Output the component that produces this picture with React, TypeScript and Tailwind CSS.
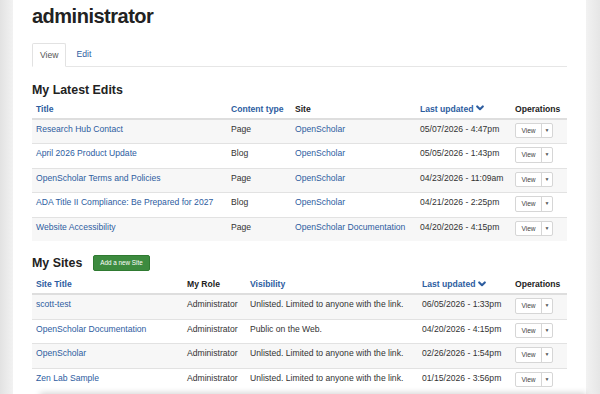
const edits = [
  { title: "Research Hub Contact", type: "Page", site: "OpenScholar", date: "05/07/2026 - 4:47pm" },
  { title: "April 2026 Product Update", type: "Blog", site: "OpenScholar", date: "05/05/2026 - 1:43pm" },
  { title: "OpenScholar Terms and Policies", type: "Page", site: "OpenScholar", date: "04/23/2026 - 11:09am" },
  { title: "ADA Title II Compliance: Be Prepared for 2027", type: "Blog", site: "OpenScholar", date: "04/21/2026 - 2:25pm" },
  { title: "Website Accessibility", type: "Page", site: "OpenScholar Documentation", date: "04/20/2026 - 4:15pm" },
];

const sites = [
  { title: "scott-test", role: "Administrator", vis: "Unlisted. Limited to anyone with the link.", date: "06/05/2026 - 1:33pm" },
  { title: "OpenScholar Documentation", role: "Administrator", vis: "Public on the Web.", date: "04/20/2026 - 4:15pm" },
  { title: "OpenScholar", role: "Administrator", vis: "Unlisted. Limited to anyone with the link.", date: "02/26/2026 - 1:54pm" },
  { title: "Zen Lab Sample", role: "Administrator", vis: "Unlisted. Limited to anyone with the link.", date: "01/15/2026 - 3:56pm" },
];

const Chevron = () => (
  <svg className="inline-block ml-[3px] -mt-[2px] h-[6px] w-[8px]" viewBox="0 0 10 7" fill="none" stroke="#2d5d9f" strokeWidth="2.6" strokeLinecap="round" strokeLinejoin="round">
    <path d="M1.5 1.5 L5 5 L8.5 1.5" />
  </svg>
);

const ViewButton = () => (
  <div className="flex h-[15.5px] w-[38px] rounded-[2px] border border-[#d6d6d6] bg-white text-[6.6px] text-[#444]">
    <span className="flex w-[26px] items-center justify-center border-r border-[#d6d6d6]">View</span>
    <span className="flex flex-1 items-center justify-center text-[5px] text-[#555]">▼</span>
  </div>
);

const th = "h-[21px] align-bottom pb-[3px] pl-[4px] text-left font-bold leading-[12px]";
const td = "align-top pt-[3px] pb-[5px] pl-[4px] leading-[13px]";

export default function App() {
  return (
    <div className="flex h-[394px] w-[600px] overflow-hidden bg-white font-['Liberation_Sans',Arial,sans-serif] text-[8.6px] text-[#333] relative">
      <div className="w-[13px] shrink-0 bg-gradient-to-r from-[#e2e2e2] to-[#f2f2f2]" />
      <div className="flex-1 px-[19px]">
        <h1 className="text-[20px] leading-[32px] font-bold tracking-[-0.5px] text-[#222]">administrator</h1>

        <div className="mt-[11px] flex border-b border-[#e6e6e6]">
          <div className="-mb-px flex h-[24px] items-center rounded-t-[2px] border border-[#e2e2e2] border-b-white bg-white px-[7px] text-[#555]">View</div>
          <div className="ml-[2px] flex h-[23px] items-center px-[8px] text-[#2d5d9f]">Edit</div>
        </div>

        <h2 className="mt-[14.5px] text-[12.4px] leading-[16px] font-bold text-[#222]">My Latest Edits</h2>
        <table className="w-full border-collapse table-fixed">
          <colgroup>
            <col className="w-[195px]" />
            <col className="w-[64px]" />
            <col className="w-[125px]" />
            <col className="w-[95px]" />
            <col />
          </colgroup>
          <thead>
            <tr className="border-b-2 border-[#dedede]">
              <th className={`${th} text-[#2d5d9f]`}>Title</th>
              <th className={`${th} text-[#2d5d9f]`}>Content type</th>
              <th className={`${th} text-[#222]`}>Site</th>
              <th className={`${th} text-[#2d5d9f]`}>Last updated<Chevron /></th>
              <th className={`${th} text-[#222]`}>Operations</th>
            </tr>
          </thead>
          <tbody>
            {edits.map((e, i) => (
              <tr key={i} className={`border-t border-[#e2e2e2] ${i % 2 === 0 ? "bg-[#f7f7f7]" : "bg-white"}`}>
                <td className={`${td} text-[#2d5d9f]`}>{e.title}</td>
                <td className={td}>{e.type}</td>
                <td className={`${td} text-[#2d5d9f]`}>{e.site}</td>
                <td className={td}>{e.date}</td>
                <td className={td}><ViewButton /></td>
              </tr>
            ))}
          </tbody>
        </table>

        <div className="mt-[14px] flex h-[16px] items-center">
          <h2 className="text-[12.4px] leading-[16px] font-bold text-[#222]">My Sites</h2>
          <button className="ml-[11px] flex h-[16px] items-center rounded-[2px] border border-[#2f7a31] bg-[#3d8b3f] px-[6px] text-[6.3px] text-white">Add a new Site</button>
        </div>
        <table className="w-full border-collapse table-fixed">
          <colgroup>
            <col className="w-[151px]" />
            <col className="w-[63px]" />
            <col className="w-[172px]" />
            <col className="w-[93px]" />
            <col />
          </colgroup>
          <thead>
            <tr className="border-b-2 border-[#dedede]">
              <th className={`${th} h-[23px] text-[#2d5d9f]`}>Site Title</th>
              <th className={`${th} text-[#222]`}>My Role</th>
              <th className={`${th} text-[#2d5d9f]`}>Visibility</th>
              <th className={`${th} text-[#2d5d9f]`}>Last updated<Chevron /></th>
              <th className={`${th} text-[#222]`}>Operations</th>
            </tr>
          </thead>
          <tbody>
            {sites.map((s, i) => (
              <tr key={i} className={`border-t border-[#e2e2e2] ${i % 2 === 0 ? "bg-[#f7f7f7]" : "bg-white"}`}>
                <td className={`${td} text-[#2d5d9f]`}>{s.title}</td>
                <td className={td}>{s.role}</td>
                <td className={`${td} whitespace-nowrap`}>{s.vis}</td>
                <td className={td}>{s.date}</td>
                <td className={td}><ViewButton /></td>
              </tr>
            ))}
          </tbody>
        </table>
      </div>
      <div className="w-[14px] shrink-0 bg-gradient-to-r from-[#f2f2f2] to-[#e6e6e6]" />
      <div className="absolute bottom-[-10px] left-[40px] right-[14px] h-[10px] bg-white shadow-[0_-1px_6px_rgba(0,0,0,0.18)]" />
    </div>
  );
}
